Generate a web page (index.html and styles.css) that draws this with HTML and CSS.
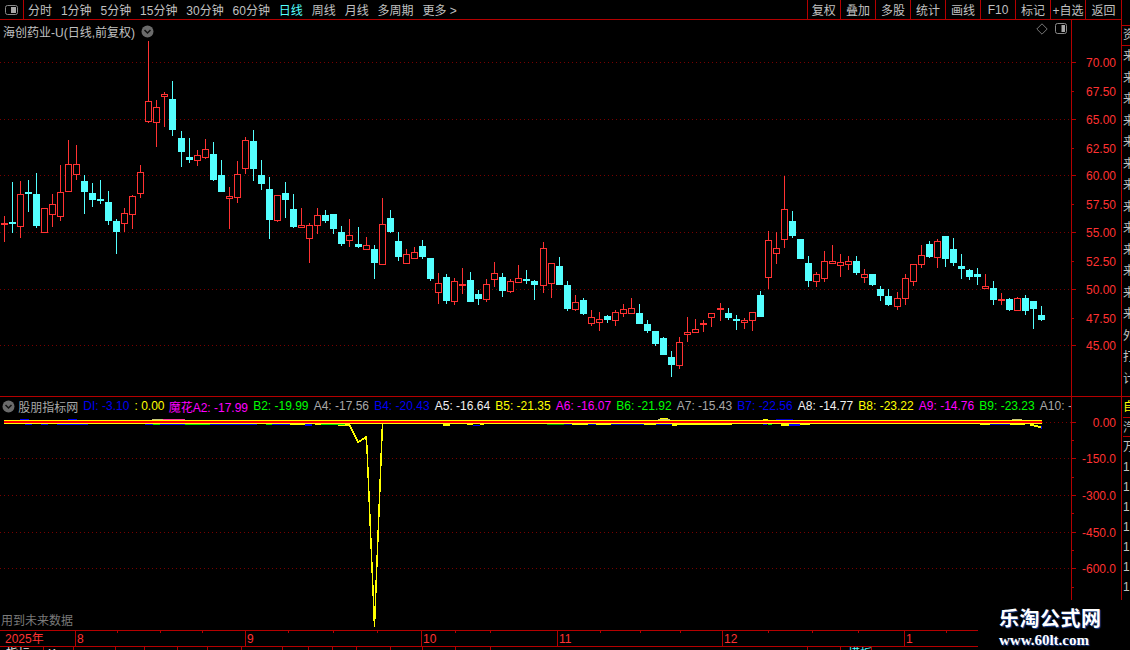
FILE: index.html
```html
<!DOCTYPE html>
<html lang="zh-CN">
<head>
<meta charset="utf-8">
<title>海创药业-U</title>
<link rel="stylesheet" href="styles.css">
</head>
<body>
<div class="app">
  <div class="main">
    <header class="toolbar">
      <div class="panel-toggle">
        <svg class="icon-panel" width="13" height="10" viewBox="0 0 13 10"><rect x="0.5" y="0.5" width="12" height="9" rx="2" class="icon-outline"/><rect x="6" y="2" width="5" height="6" class="icon-fill"/></svg>
      </div>
      <nav class="periods">
        <span>分时</span><span>1分钟</span><span>5分钟</span><span>15分钟</span><span>30分钟</span><span>60分钟</span><span class="active">日线</span><span>周线</span><span>月线</span><span>多周期</span><span>更多 &gt;</span>
      </nav>
      <div class="actions">
        <span>复权</span><span>叠加</span><span>多股</span><span>统计</span><span>画线</span><span>F10</span><span>标记</span><span>+自选</span><span>返回</span>
      </div>
    </header>

    <section class="pane price-pane">
      <svg id="price" class="chart" width="1121" height="376" viewBox="0 20 1121 376">
        <g class="grid">
          <path d="M0 62.5H1071M0 119.5H1071M0 175.5H1071M0 232.5H1071M0 289.5H1071M0 345.5H1071"/>
        </g>
        <path class="axis" d="M1071.5 20V396"/>
        <path class="axis" d="M1071 62.5h5M1071 91.5h3M1071 119.5h5M1071 148.5h3M1071 175.5h5M1071 204.5h3M1071 232.5h5M1071 261.5h3M1071 289.5h5M1071 318.5h3M1071 345.5h5"/>
        <g class="axis-labels">
          <text x="1116" y="67">70.00</text>
          <text x="1116" y="96">67.50</text>
          <text x="1116" y="124">65.00</text>
          <text x="1116" y="153">62.50</text>
          <text x="1116" y="180">60.00</text>
          <text x="1116" y="209">57.50</text>
          <text x="1116" y="237">55.00</text>
          <text x="1116" y="266">52.50</text>
          <text x="1116" y="294">50.00</text>
          <text x="1116" y="323">47.50</text>
          <text x="1116" y="350">45.00</text>
        </g>
      </svg>
      <div class="price-title">
        <span>海创药业-U(日线,前复权)</span>
        <svg class="chev" width="13" height="13" viewBox="0 0 13 13"><circle cx="6.5" cy="6.5" r="6" class="chev-bg"/><path d="M3.5 5l3 3 3-3" class="chev-mark"/></svg>
      </div>
      <div class="price-tools">
        <svg width="12" height="12" viewBox="0 0 12 12"><path d="M6 .8L11.2 6 6 11.2 .8 6z" class="icon-diamond"/></svg>
        <svg class="icon-panel" width="13" height="12" viewBox="0 0 13 12"><rect x="0.5" y="0.5" width="11" height="10" rx="2" class="icon-outline"/><rect x="6.5" y="2" width="3.500" height="7" class="icon-fill"/></svg>
      </div>
    </section>

    <section class="pane ind-pane">
      <svg id="indicator" class="chart" width="1121" height="233" viewBox="0 397 1121 233">
        <path class="grid-line" d="M1042 422.500H1071M0 458.500H1071M0 495.500H1071M0 532.500H1071M0 568.500H1071"/>
        <g id="ind-bits"></g>
        <polyline class="spike" points="345,424 349,424 351,428 354,434 358,442 360,441 363,439 366,437 367,448 368,472 369,496 370,520 371,543 372,567 373,590 374,614 374.500,627 375,613 376,587 377,561 378,537 379,511 380,486 381,460 382,435 382.500,423"/>
        <rect class="stack-y" x="4" y="420" width="1038" height="1"/>
        <rect class="stack-r" x="4" y="421" width="1038" height="2"/>
        <rect class="stack-y" x="4" y="423" width="1038" height="1"/>
        <path class="axis" d="M1071.500 397V630"/>
        <path class="axis" d="M1071 422.500h5M1071 440.500h3M1071 458.500h5M1071 477.500h3M1071 495.500h5M1071 513.500h3M1071 532.500h5M1071 550.500h3M1071 568.500h5M1071 587.500h3"/>
        <g class="axis-labels">
          <text x="1116" y="427">0.00</text>
          <text x="1116" y="463">-150.0</text>
          <text x="1116" y="500">-300.0</text>
          <text x="1116" y="537">-450.0</text>
          <text x="1116" y="573">-600.0</text>
        </g>
      </svg>
      <div class="legend">
        <svg class="chev" width="13" height="13" viewBox="0 0 13 13"><circle cx="6.5" cy="6.5" r="6" class="chev-bg"/><path d="M3.500 5l3 3 3-3" class="chev-mark"/></svg>
        <span class="legend-name">股朋指标网</span>
        <span class="blue">DI: -3.10</span>
        <span class="yellow">: 0.00</span>
        <span class="magenta flush">魔花A2: -17.99</span>
        <span class="green">B2: -19.99</span>
        <span class="grey">A4: -17.56</span>
        <span class="blue">B4: -20.43</span>
        <span class="white">A5: -16.64</span>
        <span class="yellow">B5: -21.35</span>
        <span class="magenta">A6: -16.07</span>
        <span class="green">B6: -21.92</span>
        <span class="grey">A7: -15.43</span>
        <span class="blue">B7: -22.56</span>
        <span class="white">A8: -14.77</span>
        <span class="yellow">B8: -23.22</span>
        <span class="magenta">A9: -14.76</span>
        <span class="green">B9: -23.23</span>
        <span class="grey">A10: -14.70</span>
      </div>
      <div class="future-note">用到未来数据</div>
    </section>

    <svg class="timeline" width="1121" height="20" viewBox="0 630 1121 20">
      <path class="axis" d="M0 630.500H1121M0 646.500H1121"/>
      <path class="axis" d="M75.500 630V646M245.500 630V646M421.500 630V646M557.500 630V646M722.500 630V646M904.500 630V646"/>
      <path class="axis" d="M117.500 630v3M160.500 630v3M202.500 630v3M288.500 630v3M333.500 630v3M377.500 630v3M455.500 630v3M490.500 630v3M600.500 630v3M640.500 630v3M680.500 630v3M768.500 630v3M812.500 630v3M858.500 630v3M946.500 630v3"/>
      <g class="time-labels">
        <text x="5" y="643">2025年</text>
        <text x="77" y="643">8</text>
        <text x="247" y="643">9</text>
        <text x="423" y="643">10</text>
        <text x="559" y="643">11</text>
        <text x="724" y="643">12</text>
        <text x="906" y="643">1</text>
      </g>
      <path class="axis" d="M43.500 646V650M73.500 646V650M115.500 646V650M144.500 646V650M177.500 646V650M207.500 646V650M241.500 646V650M282.500 646V650M308.500 646V650M332.500 646V650M356.500 646V650M390.500 646V650M422.500 646V650M455.500 646V650M490.500 646V650M807.500 646V650M840.500 646V650M871.500 646V650"/>
      <g class="tab-labels">
        <text x="6" y="658">指标</text>
        <text x="48" y="658">K</text>
      </g>
      <text class="tab-active" x="848" y="658">模板</text>
    </svg>
  </div>

  <aside class="side">
    <div class="side-top">资</div>
    <div class="side-list">
      <div>来</div><div>来</div><div>来</div><div>来</div><div>来</div><div>来</div><div>来</div><div>来</div><div>来</div><div>来</div><div>来</div><div>来</div><div>来</div><div>外</div><div>打</div><div>计</div>
    </div>
    <div class="side-sub">
      <div class="side-hot">自</div>
      <div class="side-boxed">汽</div>
      <div>万</div>
      <div>1</div><div>1</div><div>1</div><div>1</div><div>1</div><div>1</div><div>1</div><div>1</div>
    </div>
  </aside>

  <div class="watermark">
    <div class="wm-name">乐淘公式网</div>
    <div class="wm-url">www.60lt.com</div>
  </div>
</div>
<script src="chart.js"></script>
</body>
</html>
```
FILE: styles.css
```css
* { box-sizing: border-box; }
html, body { margin: 0; padding: 0; background: #000; overflow: hidden; }
body { width: 1130px; height: 650px; font: 12px "Liberation Sans", "Noto Sans CJK SC", sans-serif; color: #c0c0c0; }

.app { position: relative; display: flex; width: 1130px; height: 650px; overflow: hidden; }
.main { width: 1122px; height: 650px; border-right: 1px solid #b40000; display: flex; flex-direction: column; }

.toolbar { display: flex; align-items: center; height: 20px; flex: none; border-bottom: 1px solid #b40000; }
.panel-toggle { width: 24px; height: 19px; display: flex; align-items: center; justify-content: center; border-right: 1px solid #b40000; padding-right: 1px; }
.periods { display: flex; gap: 8.900px; padding-left: 4px; flex: 1; white-space: nowrap; }
.periods .active { color: #54ffff; }
.actions { display: flex; height: 19px; white-space: nowrap; }
.actions span { width: 35px; display: flex; align-items: center; justify-content: center; border-left: 1px solid #b40000; }
.actions span:first-child { width: 33.500px; }
.actions span:last-child { width: 36px; }

.icon-outline { fill: none; stroke: #8a8a8a; stroke-width: 1; }
.icon-fill { fill: #a8a8a8; }
.icon-diamond { fill: none; stroke: #777; stroke-width: 1; }
.chev-bg { fill: #6b6b6b; }
.chev-mark { fill: none; stroke: #111; stroke-width: 1.500; }

.pane { position: relative; flex: none; }
.price-pane { height: 377px; border-bottom: 1px solid #b40000; }
.ind-pane { height: 233px; }
.chart { display: block; }

.grid path, .grid-line { fill: none; stroke: #780000; stroke-width: 1; stroke-dasharray: 1 3; shape-rendering: crispEdges; }
.axis { fill: none; stroke: #b40000; stroke-width: 1; shape-rendering: crispEdges; }
.axis-labels text { fill: #ff3232; font-size: 12px; text-anchor: end; }

.price-title { position: absolute; left: 3px; top: 2px; display: flex; align-items: center; gap: 6px; white-space: nowrap; height: 18px; }
.price-tools { position: absolute; left: 1036px; top: 3px; display: flex; align-items: center; gap: 7px; }

.legend { position: absolute; left: 2px; top: 0; width: 1069px; height: 18px; display: flex; align-items: center; gap: 5.150px; overflow: hidden; white-space: nowrap; }
.legend .flush { margin-left: -1px; }
.legend-name { margin: 0 0 0 -2px; color: #a8a8a8; }
.legend svg, .legend span { flex: none; }
.blue { color: #0000f0; }
.yellow { color: #ffff00; }
.magenta { color: #ff00ff; }
.green { color: #00ff00; }
.grey { color: #a8a8a8; }
.white { color: #f0f0f0; }

.future-note { position: absolute; left: 1px; bottom: 1px; color: #7a7a7a; line-height: 16px; }

.spike { fill: none; stroke: #ffff00; stroke-width: 1.500; shape-rendering: crispEdges; }
.stack-y { fill: #ffff00; }
.stack-r { fill: #ff0000; }

.timeline { display: block; flex: none; }
.time-labels text { fill: #ff3232; font-size: 12px; }
.tab-labels text { fill: #e8e8e8; font-size: 12px; }
.tab-active { fill: #54ffff; font-size: 12px; }

.side { width: 8px; height: 650px; flex: none; overflow: hidden; padding-top: 25px; white-space: nowrap; line-height: 18px; }
.side > div { padding-left: 1px; }
.side-top { height: 21px; border-top: 1px solid #b40000; border-bottom: 1px solid #b40000; line-height: 19px; }
.side-list { height: 350px; overflow: hidden; }
.side-list div { height: 21.500px; line-height: 21.500px; }
.side-sub { border-top: 1px solid #b40000; }
.side-sub div { height: 20px; line-height: 20px; }
.side-hot { color: #ffff00; }
.side-boxed { border-top: 1px solid #b40000; border-bottom: 1px solid #b40000; }

.watermark { position: absolute; right: 0; bottom: 0; width: 152px; height: 50px; background: #000; padding: 7px 0 0 21px; }
.wm-name { font: bold 20px/22px "Noto Sans CJK SC", sans-serif; color: #fff; letter-spacing: .5px; text-shadow: 1px 1px 1px #1a3f8f; white-space: nowrap; }
.wm-url { font: bold 15px/16px "Liberation Serif", serif; color: #fff; margin-top: 3px; text-shadow: 1px 1px 1px #1a3f8f; white-space: nowrap; }
```
FILE: chart.js
```js
// [high, bodyTop, bodyBottom, low, colour]; pixel rows read from the chart.
var CANDLES = [
[216,223,225,242,'r'],[182,222,224,233,'c'],[181,194,227,238,'r'],[180,192,194,212,'c'],[173,194,226,228,'c'],
[208,208,233,233,'r'],[194,204,215,227,'r'],[165,192,217,221,'r'],[140,164,192,192,'r'],[145,164,175,180,'r'],
[175,181,192,214,'c'],[183,193,200,207,'c'],[180,199,201,204,'c'],[191,202,221,225,'c'],[219,221,232,254,'c'],
[208,213,224,232,'r'],[195,196,215,229,'r'],[165,172,194,198,'r'],[41,101,122,123,'r'],[100,107,123,147,'r'],
[92,94,97,127,'r'],[81,99,130,136,'c'],[131,138,152,167,'c'],[138,157,160,163,'c'],[150,155,161,166,'r'],
[139,149,158,159,'r'],[142,154,180,181,'c'],[160,175,192,192,'c'],[187,196,199,229,'r'],[161,174,198,203,'r'],
[137,140,169,174,'r'],[130,141,169,181,'c'],[160,175,184,190,'c'],[177,189,220,239,'c'],[195,195,221,222,'r'],
[182,193,200,218,'c'],[194,209,227,228,'c'],[208,225,228,228,'r'],[223,225,239,263,'r'],[208,215,226,234,'r'],
[210,215,221,223,'c'],[214,214,229,234,'c'],[226,232,244,246,'c'],[219,235,241,247,'r'],[227,244,247,248,'c'],
[237,245,250,250,'r'],[245,249,263,279,'c'],[198,224,265,265,'r'],[210,218,232,233,'c'],[232,241,257,261,'c'],
[249,254,264,264,'r'],[247,252,259,259,'r'],[240,246,257,259,'c'],[258,258,279,281,'c'],[273,283,293,304,'r'],
[274,277,301,304,'c'],[278,281,302,305,'r'],[268,284,286,294,'r'],[272,280,302,302,'c'],[290,294,299,305,'c'],
[279,284,300,302,'r'],[262,273,280,287,'r'],[273,277,291,297,'c'],[279,281,292,293,'r'],[265,278,283,283,'r'],
[270,279,281,284,'c'],[280,281,285,300,'c'],[242,248,286,293,'r'],[263,263,284,298,'r'],[257,266,285,285,'c'],
[281,285,309,311,'c'],[295,302,310,311,'r'],[298,300,314,315,'c'],[310,317,324,326,'r'],[312,319,323,331,'r'],
[315,316,320,323,'c'],[310,312,321,326,'r'],[304,309,314,317,'r'],[298,308,314,314,'r'],[304,313,324,324,'c'],
[320,324,331,333,'c'],[331,331,344,346,'c'],[337,338,355,355,'c'],[351,357,365,377,'c'],[337,342,366,369,'r'],
[317,332,335,342,'r'],[319,329,333,333,'r'],[320,323,325,332,'r'],[313,313,318,327,'r'],[303,308,310,321,'r'],
[308,313,318,320,'c'],[315,319,321,330,'c'],[318,320,323,329,'r'],[312,312,321,331,'r'],[291,295,317,317,'c'],
[231,240,278,289,'r'],[232,248,254,264,'r'],[176,209,240,248,'r'],[211,221,236,238,'c'],[239,239,259,259,'c'],
[256,263,281,287,'c'],[272,274,282,287,'r'],[251,261,279,282,'r'],[245,261,264,264,'r'],[254,262,266,277,'r'],
[256,261,265,270,'r'],[256,261,273,275,'c'],[269,274,278,283,'r'],[274,274,285,286,'c'],[286,289,296,301,'c'],
[289,296,305,306,'c'],[292,298,307,310,'r'],[274,278,299,305,'r'],[264,264,282,286,'r'],[245,255,265,268,'r'],
[241,244,257,258,'c'],[239,241,258,268,'r'],[236,236,259,267,'c'],[238,249,263,266,'c'],[254,266,269,279,'c'],
[269,270,277,280,'c'],[268,274,277,285,'c'],[274,286,289,289,'r'],[281,288,300,305,'c'],[293,299,301,305,'r'],
[298,299,310,311,'c'],[297,298,311,311,'r'],[295,298,311,315,'c'],[301,301,309,329,'c'],[306,315,320,321,'c']
];

// [x, y, width, height, colour] scraps of the indicator series poking out of the band.
var BITS = [
[20,419,9,1,'#0000f0'],[68,419,9,1,'#0000f0'],[152,419,11,1,'#c8c878'],[163,419,22,1,'#ff40a0'],
[25,424,7,1,'#0000f0'],[41,424,7,1,'#0000f0'],[57,424,31,1,'#0000f0'],[145,424,8,1,'#0000f0'],
[153,424,7,1,'#00e000'],[160,424,25,1,'#0000f0'],[185,424,25,1,'#00e000'],[210,424,47,1,'#0000f0'],
[266,424,6,1,'#00e000'],[272,424,18,1,'#0000f0'],[290,424,15,1,'#ffff00'],[305,424,7,2,'#0000f0'],
[315,424,6,1,'#ffff00'],[321,424,24,1,'#00e000'],[338,425,11,1,'#ffff00'],
[443,424,7,2,'#ffff00'],[467,424,6,1,'#ffff00'],[473,425,7,1,'#0000f0'],[480,424,4,1,'#ffff00'],
[547,424,17,1,'#00a000'],[564,424,8,1,'#0000a0'],[572,424,16,1,'#ffff00'],[588,424,8,1,'#0000c0'],
[596,424,15,1,'#ffff00'],[611,424,33,1,'#0000c0'],[644,424,12,1,'#ffff00'],[656,424,16,1,'#0000c0'],
[672,424,5,2,'#ffff00'],[677,424,55,1,'#ffff00'],
[660,418,8,2,'#ffff00'],[658,419,12,1,'#c8c878'],
[763,419,5,1,'#ffff00'],[768,424,4,1,'#00e000'],[763,424,4,1,'#0000f0'],[776,419,17,1,'#0000c0'],
[781,424,8,2,'#ffff00'],[789,424,11,2,'#0000f0'],[800,424,10,1,'#ffff00'],
[980,424,10,1,'#ffff00'],[990,424,20,1,'#0000c0'],[1010,424,15,1,'#ffff00'],[1012,419,10,1,'#c8c878'],
[1030,424,4,2,'#ffff00'],[1034,425,4,2,'#ffff00'],[1038,426,3,2,'#ffff00'],[1041,426,1,3,'#0000f0']
];

var NS = 'http://www.w3.org/2000/svg';
function rect(parent, x, y, w, h, attrs) {
  var r = document.createElementNS(NS, 'rect');
  r.setAttribute('x', x); r.setAttribute('y', y);
  r.setAttribute('width', w); r.setAttribute('height', h);
  r.setAttribute('shape-rendering', 'crispEdges');
  for (var k in attrs) r.setAttribute(k, attrs[k]);
  parent.appendChild(r);
}

var price = document.getElementById('price');
CANDLES.forEach(function (c, i) {
  var shift = i >= 111 ? 5 : i >= 89 ? 4 : i >= 67 ? 3 : i >= 44 ? 2 : i >= 22 ? 1 : 0;
  var x = 4 + 8 * i + shift;
  var colour = c[4] === 'r' ? '#ff3232' : '#54ffff';
  rect(price, x, c[0], 1, c[3] - c[0], { fill: colour });
  var thin = c[2] - c[1] < 3;
  if (c[4] === 'c' || thin) {
    rect(price, x - 3, c[1], 7, Math.max(c[2] - c[1], 2), { fill: colour });
  } else {
    rect(price, x - 2.5, c[1] + 0.5, 6, c[2] - c[1] - 1, { fill: '#000', stroke: colour, 'stroke-width': 1 });
  }
});

var bits = document.getElementById('ind-bits');
BITS.forEach(function (b) { rect(bits, b[0], b[1], b[2], b[3], { fill: b[4] }); });
```
